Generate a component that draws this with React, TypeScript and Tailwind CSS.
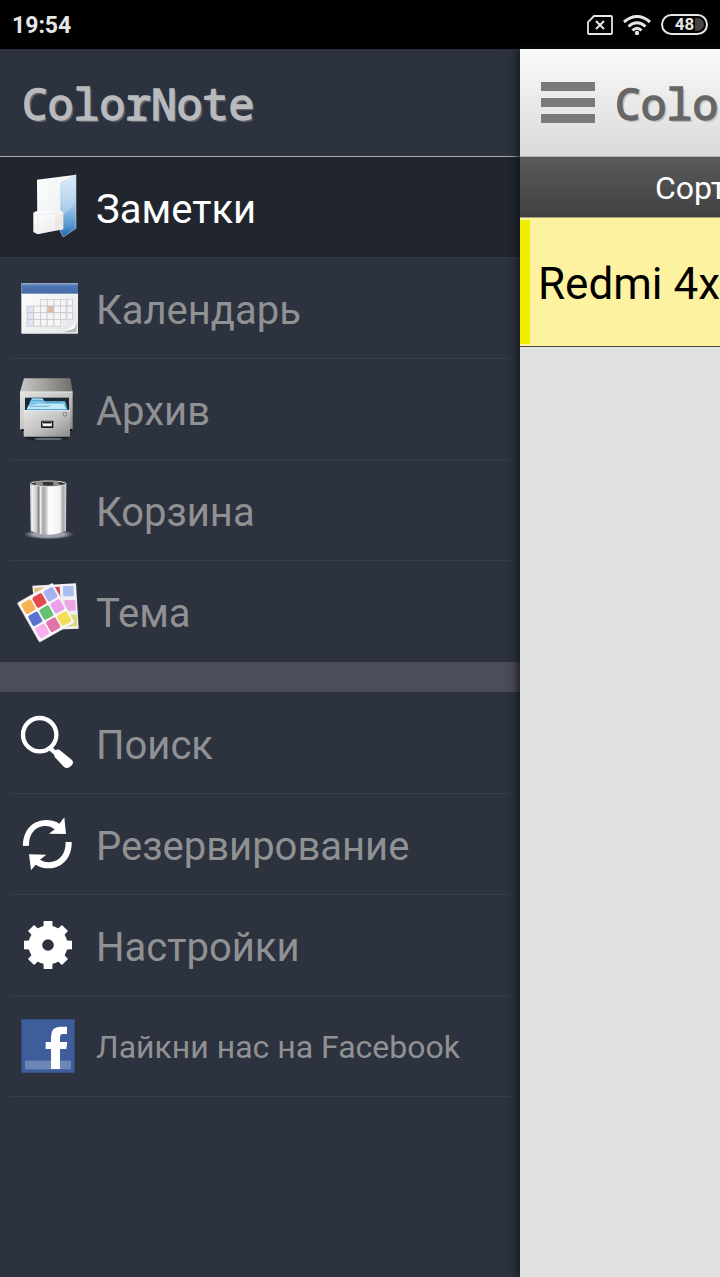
import type { ReactNode } from 'react';

function Icon({ viewBox, children }: { viewBox: string; children: ReactNode }) {
  return (
    <svg viewBox={viewBox} className="size-16 shrink-0 overflow-visible" aria-hidden="true">
      {children}
    </svg>
  );
}

function FolderIcon() {
  return (
    <Icon viewBox="48 45 192 192">
      <defs>
        <linearGradient id="folder-blue" x1="0" y1="0" x2="0" y2="1">
          <stop offset="0" stopColor="#d3e6f5" />
          <stop offset="0.5" stopColor="#9ec6e8" />
          <stop offset="0.8" stopColor="#5b9ad2" />
          <stop offset="1" stopColor="#2465ad" />
        </linearGradient>
        <linearGradient id="folder-white" x1="0" y1="0" x2="1" y2="1">
          <stop offset="0" stopColor="#ffffff" />
          <stop offset="1" stopColor="#e6e8ea" />
        </linearGradient>
      </defs>
      <path d="M111 59 L228 44 L200 190 L112 200Z" fill="url(#folder-white)" />
      <path d="M181 68 L228 44 L228 205 L190 231 L181 215Z" fill="url(#folder-blue)" stroke="#dcebf7" strokeWidth="1.5" />
      <path d="M225 50 L225 120 Q220 145 195 160 L186 163 L184 70Z" fill="#fff" opacity="0.22" />
      <path d="M100 158 L108 154 L181 151 L190 157 L190 208 L113 223 L100 216Z" fill="url(#folder-white)" />
      <path d="M104 161 L113 164 L188 158 M113 164 L113 219" stroke="#e0e2e5" strokeWidth="1.5" fill="none" />
      <path d="M165 166 L187 164 L187 206 L165 210Z" fill="#eee0d9" opacity="0.5" />
    </Icon>
  );
}

const calendarCells = [
  [2, 3, 4, 5, 6],
  [0, 1, 2, 3, 4, 5, 6],
  [0, 1, 2, 3, 4, 5, 6],
  [0, 1, 2, 3, 4],
];

function CalendarIcon() {
  return (
    <Icon viewBox="48 48 192 192">
      <defs>
        <linearGradient id="cal-head" x1="0" y1="0" x2="0" y2="1">
          <stop offset="0" stopColor="#7d9dcc" />
          <stop offset="0.3" stopColor="#4c74b2" />
          <stop offset="1" stopColor="#486da7" />
        </linearGradient>
        <linearGradient id="cal-page" x1="0" y1="0" x2="1" y2="1">
          <stop offset="0" stopColor="#ffffff" />
          <stop offset="1" stopColor="#e4e5e6" />
        </linearGradient>
      </defs>
      <rect x="64" y="70" width="170" height="151" rx="2" fill="url(#cal-page)" />
      <rect x="64" y="70" width="170" height="31" fill="url(#cal-head)" />
      {calendarCells.map((row, r) =>
        row.map((c) => (
          <rect
            key={`${r}-${c}`}
            x={81 + c * 20.2 - (c > 4 ? 1 : 0)}
            y={118 + r * 20.2}
            width={c > 4 ? 17 : 20}
            height="20"
            fill={r === 1 && c === 3 ? '#deb8a2' : c === 0 ? '#dfe4f3' : '#f5f5f5'}
            stroke="#c3c4ca"
            strokeWidth="2"
          />
        )),
      )}
      <path d="M190 217 Q216 211 230 190 L230 212 Q228 217 218 217Z" fill="#b9bbba" />
      <path d="M193 211 Q213 207 227 185 L226 199 Q224 207 213 209Z" fill="#fff" />
    </Icon>
  );
}

function ArchiveIcon() {
  return (
    <Icon viewBox="48 51 192 192">
      <defs>
        <linearGradient id="cab-top" x1="0" y1="0" x2="1" y2="0">
          <stop offset="0" stopColor="#c8c8c6" />
          <stop offset="0.4" stopColor="#a6a6a3" />
          <stop offset="1" stopColor="#6f6f6c" />
        </linearGradient>
        <linearGradient id="cab-front" x1="0" y1="0" x2="1" y2="1">
          <stop offset="0" stopColor="#e3e3e1" />
          <stop offset="0.5" stopColor="#c4c4c2" />
          <stop offset="1" stopColor="#8b8b89" />
        </linearGradient>
        <linearGradient id="cab-files" x1="0" y1="0" x2="0" y2="1">
          <stop offset="0" stopColor="#9ed9f5" />
          <stop offset="1" stopColor="#4ba7d9" />
        </linearGradient>
      </defs>
      <ellipse cx="140" cy="233" rx="66" ry="9" fill="#111722" opacity="0.75" />
      <ellipse cx="145" cy="237" rx="44" ry="4" fill="#a4a8ac" opacity="0.55" />
      <path d="M72 55 H211 L218 96 H60Z" fill="url(#cab-top)" />
      <path d="M60 95 H218 V209 H60Z" fill="url(#cab-front)" />
      <path d="M60 96 H218" stroke="#e7e7e5" strokeWidth="3" />
      <rect x="75" y="113" width="132" height="39" fill="#172a36" />
      <path d="M91 124 L96 115 H128 L133 124 H195 L203 151 H79Z" fill="url(#cab-files)" />
      <path d="M86 137 L112 131 H189 L199 147 H80Z" fill="#c4eafa" />
      <path d="M90 139 H145 L150 134 M95 122 H133 L139 127 H188" stroke="#348abd" strokeWidth="2" fill="none" />
      <rect x="71" y="151" width="139" height="79" rx="2" fill="url(#cab-front)" />
      <path d="M71 152 H210" stroke="#fff" strokeWidth="2" />
      <rect x="123" y="182" width="37" height="22" rx="2" fill="#191919" />
      <rect x="127" y="185" width="29" height="14" fill="#c9c9c9" />
      <rect x="130" y="190" width="23" height="7" fill="#fff" />
      <path d="M129 188 H154" stroke="#111" strokeWidth="4" />
      <circle cx="195" cy="163" r="6" fill="#aaa" stroke="#747474" strokeWidth="2" />
      <circle cx="194" cy="162" r="2" fill="#e5e5e5" />
      <path d="M64 207 H71 V213 H64Z M210 207 H217 V213 H210Z" fill="#111" />
    </Icon>
  );
}

function TrashIcon() {
  return (
    <Icon viewBox="48 54 192 192">
      <defs>
        <linearGradient id="can" x1="0" y1="0" x2="1" y2="0">
          <stop offset="0" stopColor="#ccc" />
          <stop offset="0.07" stopColor="#eee" />
          <stop offset="0.18" stopColor="#c9c9c9" />
          <stop offset="0.24" stopColor="#7e7e7e" />
          <stop offset="0.29" stopColor="#eee" />
          <stop offset="0.36" stopColor="#a2a2a2" />
          <stop offset="0.45" stopColor="#c9c9c9" />
          <stop offset="0.52" stopColor="#fff" />
          <stop offset="0.82" stopColor="#f2f2f2" />
          <stop offset="0.91" stopColor="#a5a5a5" />
          <stop offset="1" stopColor="#d8d8d8" />
        </linearGradient>
        <radialGradient id="can-shadow">
          <stop offset="0.6" stopColor="#9da1a8" />
          <stop offset="1" stopColor="#9da1a8" stopOpacity="0" />
        </radialGradient>
      </defs>
      <ellipse cx="146" cy="223" rx="76" ry="15" fill="url(#can-shadow)" />
      <path d="M90 71 L92 213 Q145 235 198 213 L199 71Z" fill="url(#can)" />
      <ellipse cx="144.500" cy="71" rx="54" ry="8" fill="#343434" stroke="#e2e2e2" strokeWidth="3" />
      <path d="M105 72 L110 64 H126 L131 77 Q112 77 105 72 M158 64 H172 L180 75 Q171 78 161 78Z" fill="#8d8d8d" />
    </Icon>
  );
}

const swatches = [
  '#f5b450', '#e34b4e', '#a6b3ef',
  '#5873cb', '#66c272', '#eaa1ec',
  '#f7aeef', '#e074a9', '#f5de55',
];

function ThemeIcon() {
  return (
    <Icon viewBox="48 57 192 192">
      <path d="M97 77 L228 70 L236 206 L110 211Z" fill="#f1f0f3" />
      <path d="M103 84 L135 82 L136 94 L103 98Z" fill="#e8bc75" />
      <path d="M147 82 L179 80 L181 111 L149 112Z" fill="#c8484c" />
      <rect x="189" y="78" width="32" height="31" rx="3" fill="#a9bdee" />
      <rect x="193" y="120" width="34" height="32" rx="3" fill="#eaa7e7" />
      <path d="M194 164 H231 V198 L188 201Z" fill="#dddb70" />
      <g transform="translate(52 129) rotate(-29.500)">
        <rect width="121" height="135" rx="3" fill="#faf9fa" stroke="#e0dde3" strokeWidth="2" />
        {swatches.map((color, i) => (
          <rect key={i} x={7 + (i % 3) * 38} y={8 + Math.floor(i / 3) * 42} width="33" height="36" rx="6" fill={color} />
        ))}
      </g>
    </Icon>
  );
}

function SearchIcon() {
  return (
    <Icon viewBox="48 33 192 192">
      <circle cx="119" cy="104" r="50" fill="none" stroke="#fff" strokeWidth="13" />
      <path d="M151 145 L166 159" stroke="#fff" strokeWidth="13" />
      <path d="M163 155 Q166 146 178 149 L215 179 Q223 187 215 196 L208 202 Q201 207 192 201 L165 172 Q160 164 163 155Z" fill="#fff" />
    </Icon>
  );
}

function SyncIcon() {
  return (
    <Icon viewBox="48 336 192 192">
      <path d="M69 438 C68 398 92 361 138 360 Q162 360 178 371 L193 352 L198 402 L147 401 L164 388 Q150 376 131 378 C103 381 86 405 87 437Z" fill="#fff" />
      <path d="M215 426 C217 468 190 504 148 505 Q122 505 107 494 L93 511 L87 463 L139 464 L120 479 Q137 489 153 486 C181 482 197 460 197 426Z" fill="#fff" />
    </Icon>
  );
}

const teeth = [0, 45, 90, 135, 180, 225, 270, 315];

function GearIcon() {
  return (
    <Icon viewBox="48 39 192 192">
      {teeth.map((angle) => (
        <path key={angle} d="M130 95 L131 63 H157 L158 95Z" fill="#fff" transform={`rotate(${angle} 144 135)`} />
      ))}
      <circle cx="144" cy="135" r="38" fill="none" stroke="#fff" strokeWidth="41" />
    </Icon>
  );
}

function FacebookIcon() {
  return (
    <Icon viewBox="48 342 192 192">
      <rect x="64" y="358" width="160" height="160" rx="4" fill="#3d5e9b" />
      <rect x="75" y="482" width="138" height="26" fill="#6d87b7" />
      <path d="M153 507 V447 H137 V426 H153 V410 Q153 380 181 380 H201 V402 H189 Q180 402 180 412 V426 H202 L199 447 H180 V507Z" fill="#fff" />
    </Icon>
  );
}

type Item = { label: string; icon: ReactNode; active?: boolean; small?: boolean };

const sections: Item[][] = [
  [
    { label: 'Заметки', icon: <FolderIcon />, active: true },
    { label: 'Календарь', icon: <CalendarIcon /> },
    { label: 'Архив', icon: <ArchiveIcon /> },
    { label: 'Корзина', icon: <TrashIcon /> },
    { label: 'Тема', icon: <ThemeIcon /> },
  ],
  [
    { label: 'Поиск', icon: <SearchIcon /> },
    { label: 'Резервирование', icon: <SyncIcon /> },
    { label: 'Настройки', icon: <GearIcon /> },
    { label: 'Лайкни нас на Facebook', icon: <FacebookIcon />, small: true },
  ],
];

function MenuSection({ items, lastLine }: { items: Item[]; lastLine: boolean }) {
  return (
    <ul>
      {items.map((item, i) => (
        <li key={item.label} className={item.active ? 'bg-[#20252e]' : ''}>
          <button
            type="button"
            className={`flex h-[100px] w-full items-center gap-4 pl-4 text-left ${item.small ? 'text-[32px]' : 'text-[40px]'} ${item.active ? 'text-white' : 'text-[#909193]'}`}
          >
            {item.icon}
            <span className={`whitespace-nowrap ${item.small ? 'pt-0.5' : 'pt-1.5'}`}>{item.label}</span>
          </button>
          <div
            className={`h-px ${item.active ? 'bg-[#353948]' : i < items.length - 1 || lastLine ? 'mr-2 ml-2.5 bg-[#383b48]' : ''}`}
          />
        </li>
      ))}
    </ul>
  );
}

function StatusBar() {
  return (
    <div className="flex h-[49px] items-center justify-between bg-black px-3 text-[#e6e6e6]">
      <span className="pt-1 text-[23px] font-bold">19:54</span>
      <div className="flex items-center gap-2.5">
        <svg viewBox="0 0 26 20" className="h-5 w-[26px]" fill="none" stroke="#e6e6e6" aria-hidden="true">
          <path d="M7 1 H24 Q25 1 25 2 V18 Q25 19 24 19 H2 Q1 19 1 18 V7Z" strokeWidth="1.800" />
          <path d="M9 6 L17 14 M17 6 L9 14" strokeWidth="2" />
        </svg>
        <svg viewBox="0 0 28 20" className="h-5 w-7" fill="none" stroke="#e6e6e6" strokeWidth="3" aria-hidden="true">
          <path d="M1 7 Q14 -4 27 7 M5.500 11.500 Q14 4 22.500 11.500 M9.500 15.500 Q14 11 18.500 15.500" />
          <circle cx="14" cy="18" r="2.200" fill="#e6e6e6" stroke="none" />
        </svg>
        <div className="flex h-[21px] w-[47px] items-center justify-center rounded-full border-2 border-[#e6e6e6] bg-linear-to-r from-black from-75% to-[#444] to-75% bg-clip-content p-0.5 text-[17px] leading-none font-bold">
          48
        </div>
      </div>
    </div>
  );
}

export default function App() {
  return (
    <div className="flex min-h-screen flex-col overflow-hidden font-['Roboto','Noto_Sans',sans-serif]">
      <StatusBar />
      <div className="flex flex-1">
        <nav className="w-[520px] shrink-0 bg-[#2d323f]">
          <div className="flex h-[108px] items-center border-b border-[#a9abb0] pt-1 pl-[22px] font-['Droid_Sans_Mono','Noto_Sans_Mono','DejaVu_Sans_Mono',monospace] text-[43px] text-[#b9babd] [text-shadow:2px_2px_1px_#66686e] [-webkit-text-stroke:1.5px_#b9babd]">
            ColorNote
          </div>
          <MenuSection items={sections[0]} lastLine={false} />
          <div className="mb-px h-[30px] bg-[#4b4e5a]" />
          <MenuSection items={sections[1]} lastLine />
        </nav>
        <main className="relative min-w-0 flex-1 bg-[#e0e0e0] whitespace-nowrap shadow-[-2px_0_10px_#10131a]">
          <header className="flex h-[108px] items-center gap-5 overflow-hidden border-b border-[#b5b5b5] bg-linear-to-b from-[#fafafa] to-[#dadada] pl-[21px]">
            <button type="button" aria-label="Меню" className="flex w-[54px] shrink-0 flex-col gap-[7px]">
              <span className="h-[9px] bg-[#7a7a7a]" />
              <span className="h-[9px] bg-[#7a7a7a]" />
              <span className="h-[9px] bg-[#7a7a7a]" />
            </button>
            <h1 className="pt-1 font-['Droid_Sans_Mono','Noto_Sans_Mono','DejaVu_Sans_Mono',monospace] text-[43px] text-[#666] [text-shadow:2px_2px_1px_#bbb] [-webkit-text-stroke:1.5px_#666]">
              Colo
            </h1>
          </header>
          <button
            type="button"
            className="flex h-[60px] w-full items-center overflow-hidden bg-linear-to-b from-[#5a5a5a] to-[#414141] pt-0.5 pl-[135px] text-[32px] text-white"
          >
            Сорт
          </button>
          <a
            href="#note"
            className="flex h-[130px] items-center overflow-hidden border-t border-b border-t-[#a8a37c] border-b-[#4c4a3a] bg-[#fdf2a0] py-0.5 text-[44px] text-black"
          >
            <span className="w-2.5 shrink-0 self-stretch bg-[#f0ee00]" />
            <span className="pt-1 pl-2">Redmi 4x</span>
          </a>
        </main>
      </div>
    </div>
  );
}
